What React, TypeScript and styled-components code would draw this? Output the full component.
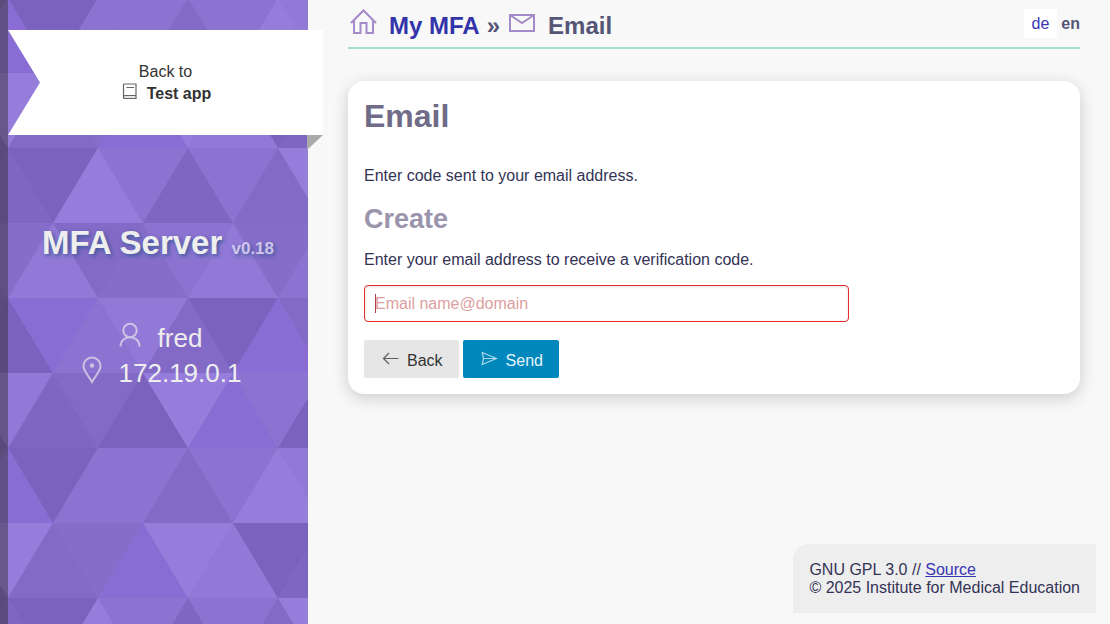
import React from "react";
import styled, { createGlobalStyle } from "styled-components";

const GlobalStyle = createGlobalStyle`
  *, *::before, *::after { box-sizing: border-box; }
  html { height: 100%; }
  body {
    margin: 0;
    min-height: 100%;
    background: #f8f8f8;
    color: #333355;
    font: 16px/18px "Liberation Sans", Arial, sans-serif;
  }
  h1, h2, h3, p { margin: 0; }
`;

const Page = styled.div`
  display: flex;
  min-height: 100vh;
`;

/* ---------- sidebar ---------- */

const Sidebar = styled.aside`
  position: relative;
  flex: 0 0 308px;
  padding: 30px 0 32px 8px;
  text-align: center;
  color: #eee;
`;

const Backdrop = styled.svg`
  position: absolute;
  inset: 0;
  width: 100%;
  height: 100%;
`;

const SidebarContent = styled.div`
  position: relative;
`;

const Ribbon = styled.div`
  position: relative;
  margin-right: -15px;

  &::after {
    content: "";
    position: absolute;
    top: 100%;
    right: 0;
    width: 16px;
    height: 15px;
    background: #aaa;
    clip-path: polygon(0 0, 100% 0, 0 100%);
  }
`;

const RibbonLink = styled.a`
  display: flex;
  flex-direction: column;
  align-items: center;
  justify-content: center;
  height: 105px;
  line-height: 22px;
  color: #333;
  background: #fff;
  text-decoration: none;
  border-radius: 0 2px 0 0;
  clip-path: polygon(0 0, 100% 0, 100% 100%, 0 100%, 32px 50%);
`;

const RibbonTitle = styled.strong`
  display: flex;
  align-items: flex-start;
  gap: 9px;
  padding-left: 2px;
`;

const Brand = styled.h1`
  margin-top: 88px;
  font-size: 33px;
  line-height: 40px;
  text-shadow: 2px 2px 4px #3c5a9a;
`;

const Version = styled.small`
  font-size: 17px;
  color: #d0c4ec;
`;

const Account = styled.ul`
  list-style: none;
  margin: 52px 0 0;
  padding: 0 0 0 4px;
  font-size: 26px;
  line-height: 35px;
`;

const AccountRow = styled.li`
  display: flex;
  justify-content: center;
  gap: 12px;
`;

const Icon = styled.svg<{ $size: number }>`
  flex: none;
  width: ${(p) => p.$size}px;
  height: ${(p) => p.$size}px;
  fill: none;
  stroke: currentColor;
  stroke-width: 1.2;
`;

/* ---------- main column ---------- */

const Main = styled.div`
  flex: 1;
  min-width: 0;
  display: flex;
  flex-direction: column;
  padding: 0 14px 11px 40px;
`;

const TopBar = styled.header`
  display: flex;
  justify-content: space-between;
  align-items: flex-start;
  height: 49px;
  margin-right: 16px;
  padding-top: 9px;
  border-bottom: 2px solid #a8e0cc;
`;

const Crumbs = styled.nav`
  display: flex;
  align-items: center;
  font-size: 24px;
  line-height: 34px;
  font-weight: bold;
  color: #555577;
`;

const CrumbIcon = styled.span`
  display: flex;
  height: 34px;
  padding-right: 10px;
  color: #a48ac8;
`;

const CrumbLink = styled.a`
  display: flex;
  color: #3333aa;
  text-decoration: none;
`;

const Divider = styled.span`
  padding: 0 7px;
`;

const Languages = styled.nav`
  display: flex;
  gap: 4px;
  line-height: 29px;
`;

const LanguageLink = styled.a`
  padding: 0 8px;
  background: #fff;
  color: #3a35b5;
  text-decoration: none;
`;

const CurrentLanguage = styled.strong`
  color: #555577;
`;

const Card = styled.main`
  margin: 32px 16px 0 0;
  padding: 16px;
  background: #fff;
  border-radius: 16px;
  box-shadow: 0 4px 16px rgba(0, 0, 0, 0.18);
`;

const Title = styled.h2`
  font-size: 32px;
  line-height: 38px;
  color: #706c88;
`;

const Subtitle = styled.h3`
  margin-top: 18px;
  font-size: 27px;
  line-height: 32px;
  color: #9a94ac;
`;

const Text = styled.p<{ $gap: number }>`
  margin-top: ${(p) => p.$gap}px;
`;

const Field = styled.input`
  display: block;
  width: 100%;
  max-width: 485px;
  height: 37px;
  margin-top: 16px;
  padding: 0 10px;
  font: inherit;
  color: #b03030;
  background: #fff;
  border: 1px solid #e52d2d;
  border-radius: 4px;
  box-shadow: inset 0 1px 3px #ddd;
  outline: none;

  &::placeholder {
    color: #dca0a0;
    opacity: 1;
  }

  /* steady insertion mark while the field is empty */
  &:placeholder-shown {
    caret-color: transparent;
    background: linear-gradient(#a83c48, #a83c48) 10px 50% / 1px 19px no-repeat #fff;
  }
`;

const Actions = styled.div`
  display: flex;
  gap: 4px;
  margin-top: 18px;
`;

const Button = styled.button<{ $primary?: boolean }>`
  display: flex;
  align-items: flex-start;
  gap: 8px;
  height: 38px;
  padding: 10px 16px 0 18px;
  font: inherit;
  line-height: 22px;
  color: ${(p) => (p.$primary ? "#e6f3f9" : "#333")};
  background: ${(p) => (p.$primary ? "#0088bd" : "#e6e6e6")};
  border: 0;
  border-radius: 2px;

  svg { opacity: 0.75; }
`;

const Footer = styled.footer`
  align-self: flex-end;
  margin-top: auto;
  padding: 17px 16px 16px;
  background: #eee;
  border-radius: 16px 0 0 0;

  a { color: #3a35b5; }
`;

/* ---------- triangle pattern ---------- */

const SIDE = 90;
const ROW = 75;
const tones: Record<string, string> = {
  a: "#7c62bf",
  b: "#8066c3",
  c: "#836ac6",
  d: "#866dca",
  e: "#8c73d1",
  f: "#9279d7",
  g: "#967ddb",
  v: "#8a6dd4",
};
// One letter per triangle, left to right, each half a side further on.
const rows = ["bvaeecegf", "bgcdvgfab", "abagebecg", "cdfcdefde", "bavefcavc", "afbcagvea"];

const Triangles = () => (
  <Backdrop aria-hidden="true">
    <defs>
      <pattern id="triangles" width="400" height={ROW * rows.length} y="-2" patternUnits="userSpaceOnUse">
        <rect width="400" height={ROW * rows.length} fill={tones.d} />
        {rows.map((row, r) =>
          row.split("").map((tone, i) => {
            const x = -82 + (i * SIDE) / 2;
            const pointsDown = (i + r) % 2 === 0;
            const base = pointsDown ? r * ROW : (r + 1) * ROW;
            const tip = pointsDown ? (r + 1) * ROW : r * ROW;
            return (
              <polygon
                key={`${r}-${i}`}
                fill={tones[tone]}
                points={`${x},${base} ${x + SIDE},${base} ${x + SIDE / 2},${tip}`}
              />
            );
          })
        )}
      </pattern>
    </defs>
    <rect width="100%" height="100%" fill="url(#triangles)" />
    <rect width="8" height="100%" fill="#38323a" fillOpacity="0.5" />
  </Backdrop>
);

export default function App() {
  return (
    <Page>
      <GlobalStyle />
      <Sidebar>
        <Triangles />
        <SidebarContent>
          <Ribbon>
            <RibbonLink href="#">
              <span>Back to</span>
              <RibbonTitle>
                <Icon $size={16} viewBox="0 0 16 16" opacity="0.75">
                  <path d="M2 12.500H14V15.500H2Z" fill="#ddd" stroke="none" />
                  <path d="M1.500 14.500V2Q1.500 1 2.500 1H14V15.500H2.500Q1.500 15.500 1.500 14.500Q1.500 12.500 3 12.500H14M4.500 4.500H12" />
                </Icon>
                Test app
              </RibbonTitle>
            </RibbonLink>
          </Ribbon>
          <Brand>
            MFA Server <Version>v0.18</Version>
          </Brand>
          <Account>
            <AccountRow>
              <Icon $size={28} viewBox="0 0 28 28" opacity="0.65">
                <g strokeWidth="2">
                  <circle cx="12" cy="9.500" r="6.700" />
                  <path d="M2.500 25.500C2.500 13 21.500 13 21.500 25.500" />
                </g>
              </Icon>
              fred
            </AccountRow>
            <AccountRow>
              <Icon $size={28} viewBox="0 0 28 28" opacity="0.65">
                <path strokeWidth="2" d="M13 26C9 19 4.500 15 4.500 10A8.500 8.500 0 0 1 21.500 10C21.500 15 17 19 13 26Z" />
                <circle cx="13" cy="9.500" r="2.200" fill="currentColor" stroke="none" />
              </Icon>
              172.19.0.1
            </AccountRow>
          </Account>
        </SidebarContent>
      </Sidebar>
      <Main>
        <TopBar>
          <Crumbs aria-label="Breadcrumb">
            <CrumbLink href="#">
              <CrumbIcon>
                <Icon $size={31} viewBox="0 0 31 31">
                  <path strokeWidth="2" d="M3 14L15.500 1.500L28 14M6 12V24H12.500V14H18.500V24H25V12" />
                </Icon>
              </CrumbIcon>
              My MFA
            </CrumbLink>
            <Divider>»</Divider>
            <CrumbIcon>
              <Icon $size={31} viewBox="0 0 31 31">
                <path strokeWidth="2" d="M3 6H27V22H3ZM3 6L15 14L27 6" />
              </Icon>
            </CrumbIcon>
            Email
          </Crumbs>
          <Languages aria-label="Language">
            <LanguageLink href="#">de</LanguageLink>
            <CurrentLanguage>en</CurrentLanguage>
          </Languages>
        </TopBar>
        <Card>
          <Title>Email</Title>
          <Text $gap={32}>Enter code sent to your email address.</Text>
          <Subtitle>Create</Subtitle>
          <Text $gap={16}>Enter your email address to receive a verification code.</Text>
          <Field type="email" aria-label="Email" placeholder="Email name@domain" autoFocus />
          <Actions>
            <Button type="button">
              <Icon $size={17} viewBox="0 0 17 17">
                <path d="M16.500 8.500H1.500M7 3L1.500 8.500L7 14" />
              </Icon>
              Back
            </Button>
            <Button type="submit" $primary>
              <Icon $size={17} viewBox="0 0 17 17">
                <path d="M1.200 2.500L15.500 8.500L1.200 14.500L2.500 8.500ZM2.500 8.500H15.500" />
              </Icon>
              Send
            </Button>
          </Actions>
        </Card>
        <Footer>
          GNU GPL 3.0 // <a href="#">Source</a>
          <br />© 2025 Institute for Medical Education
        </Footer>
      </Main>
    </Page>
  );
}
